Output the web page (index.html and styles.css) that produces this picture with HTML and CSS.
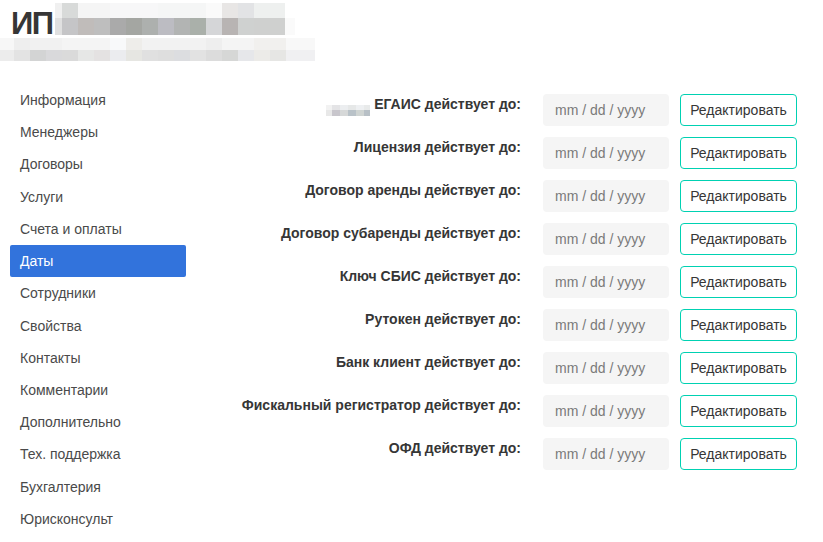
FILE: index.html
```html
<!DOCTYPE html>
<html lang="ru">
<head>
<meta charset="utf-8">
<title>ИП</title>
<link rel="stylesheet" href="styles.css">
</head>
<body>
<header class="head">
  <div class="head-row1">
    <h1 class="title">ИП</h1>
    <div class="mosaic1">
      <div class="m1a"></div>
      <div class="m1b"></div>
    </div>
  </div>
  <div class="head-row2">
    <div class="m2a"></div>
    <div class="m2b"></div>
  </div>
</header>
<main class="main">
  <nav class="menu">
    <a class="menu-item">Информация</a>
    <a class="menu-item">Менеджеры</a>
    <a class="menu-item">Договоры</a>
    <a class="menu-item">Услуги</a>
    <a class="menu-item">Счета и оплаты</a>
    <a class="menu-item is-active">Даты</a>
    <a class="menu-item">Сотрудники</a>
    <a class="menu-item">Свойства</a>
    <a class="menu-item">Контакты</a>
    <a class="menu-item">Комментарии</a>
    <a class="menu-item">Дополнительно</a>
    <a class="menu-item">Тех. поддержка</a>
    <a class="menu-item">Бухгалтерия</a>
    <a class="menu-item">Юрисконсульт</a>
  </nav>
  <section class="form">
    <label class="label"><span class="blur-word"><span class="bw-a"></span><span class="bw-b"></span></span>ЕГАИС действует до:</label>
    <input class="date" type="text" placeholder="mm / dd / yyyy">
    <button class="btn">Редактировать</button>

    <label class="label">Лицензия действует до:</label>
    <input class="date" type="text" placeholder="mm / dd / yyyy">
    <button class="btn">Редактировать</button>

    <label class="label">Договор аренды действует до:</label>
    <input class="date" type="text" placeholder="mm / dd / yyyy">
    <button class="btn">Редактировать</button>

    <label class="label">Договор субаренды действует до:</label>
    <input class="date" type="text" placeholder="mm / dd / yyyy">
    <button class="btn">Редактировать</button>

    <label class="label">Ключ СБИС действует до:</label>
    <input class="date" type="text" placeholder="mm / dd / yyyy">
    <button class="btn">Редактировать</button>

    <label class="label">Рутокен действует до:</label>
    <input class="date" type="text" placeholder="mm / dd / yyyy">
    <button class="btn">Редактировать</button>

    <label class="label">Банк клиент действует до:</label>
    <input class="date" type="text" placeholder="mm / dd / yyyy">
    <button class="btn">Редактировать</button>

    <label class="label">Фискальный регистратор действует до:</label>
    <input class="date" type="text" placeholder="mm / dd / yyyy">
    <button class="btn">Редактировать</button>

    <label class="label">ОФД действует до:</label>
    <input class="date" type="text" placeholder="mm / dd / yyyy">
    <button class="btn">Редактировать</button>
  </section>
</main>
</body>
</html>
```

FILE: styles.css
```css
* { box-sizing: border-box; }
html, body { margin: 0; padding: 0; background: #fff; }
body {
  font-family: "Liberation Sans", Arial, sans-serif;
  color: #4a4a4a;
  font-size: 14px;
}

.head { display: flex; flex-direction: column; }
.head-row1 {
  display: grid;
  grid-template-columns: 55px 240px;
  height: 38px;
}
.title {
  margin: 0;
  padding: 6px 0 0 11px;
  font-size: 31px;
  line-height: 36px;
  font-weight: 700;
  letter-spacing: -1.5px;
  color: #363636;
  white-space: nowrap;
}
.mosaic1 { padding-top: 3px; }
.m1a {
  height: 15px;
  background: linear-gradient(to right,
    #f0f0f0 0 7px, #d8dad9 7px 23px, #f5f5f5 23px 55px, #f7f7f8 55px 103px,
    #f5f6f6 103px 151px, #fafafa 151px 167px, #e8e6e5 167px 183px,
    #e2e3e5 183px 199px, #eef0ef 199px 230px, transparent 230px);
}
.m1b {
  height: 17px;
  background: linear-gradient(to right,
    #e0e0e0 0 7px, #c5c5c7 7px 23px, #c0bcba 23px 39px, #bebebe 39px 55px,
    #aaaaaa 55px 71px, #a4a6a2 71px 87px, #adb0ae 87px 103px, #bcbcc2 103px 119px,
    #b2b4b3 119px 135px, #aab0aa 135px 151px, #d5d6d8 151px 167px,
    #b8b4b3 167px 183px, #cfd1d0 183px 199px, #cfd0cf 199px 230px,
    #fafafa 230px 240px);
}
.head-row2 { width: 315px; }
.m2a {
  height: 12px;
  background: linear-gradient(to right,
    #f7f7f7 0 14px, #eeeeee 14px 30px, #f1f1f1 30px 62px, #f4f4f4 62px 110px,
    #f8f9fa 110px 126px, #eeedea 126px 142px, #f2f2f2 142px 206px,
    #eeeeee 206px 222px, #f4f4f4 222px 254px, #f1f0ee 254px 286px, #f8f8f8 286px 315px);
}
.m2b {
  height: 11px;
  background: linear-gradient(to right,
    #ececec 0 14px, #e3e3e3 14px 30px, #d3d4d4 30px 46px, #d9d9db 46px 62px,
    #dadada 62px 78px, #e6e7e6 78px 94px, #e4e2e2 94px 110px, #ebecef 110px 126px,
    #e6e6e2 126px 142px, #e0e0e0 142px 158px, #dedede 158px 174px,
    #dcdde0 174px 190px, #e2e2e2 190px 206px, #dcdcdc 206px 222px,
    #d6d7d6 222px 238px, #e6e7ea 238px 254px, #ecebe8 254px 270px,
    #e6e6e4 270px 286px, #f0f0f2 286px 315px);
}

.main {
  display: flex;
  align-items: flex-start;
  margin-top: 23px;
}
.menu {
  display: flex;
  flex-direction: column;
  flex: 0 0 176px;
  width: 176px;
  margin-left: 10px;
}
.menu-item {
  display: block;
  height: 32.23px;
  line-height: 32px;
  padding: 0 10px;
  font-size: 14px;
  color: #4a4a4a;
  border-radius: 2px;
  text-decoration: none;
}
.menu-item.is-active {
  background: #3273dc;
  color: #fff;
}

.form {
  display: grid;
  grid-template-columns: 346px 126px 117px;
  column-gap: 11px;
  row-gap: 11px;
  padding-top: 10px;
}
.label {
  padding-right: 11px;
  text-align: right;
  font-weight: 700;
  font-size: 14px;
  line-height: 21px;
  color: #363636;
  white-space: nowrap;
}
.blur-word {
  display: inline-flex;
  flex-direction: column;
  vertical-align: -1px;
  width: 44px;
  height: 11px;
  margin-right: 4px;
}
.bw-a {
  height: 5px;
  background: linear-gradient(to right,
    #f2f2f2 0 6px, #e4e4e6 6px 14px, #eceef0 14px 22px, #e6e8e8 22px 30px,
    #eef0f2 30px 38px, #e8eaea 38px 44px);
}
.bw-b {
  height: 6px;
  background: linear-gradient(to right,
    #e8e8e8 0 6px, #c8c6cc 6px 14px, #d6d8d8 14px 22px, #b9c2c8 22px 30px,
    #cfd4d2 30px 38px, #b8c0c6 38px 44px);
}
.date {
  height: 32px;
  width: 126px;
  border: none;
  border-radius: 4px;
  background: #f5f5f5;
  padding: 0 12px;
  font-family: "Liberation Sans", Arial, sans-serif;
  font-size: 14px;
  color: #363636;
  outline: none;
}
.date::placeholder { color: #7a7a7a; opacity: 1; }
.btn {
  height: 32px;
  width: 117px;
  padding: 0 8px;
  border: 1px solid #00d1b2;
  border-radius: 4px;
  background: #fff;
  font-family: "Liberation Sans", Arial, sans-serif;
  font-size: 14px;
  color: #363636;
  cursor: pointer;
}
```
